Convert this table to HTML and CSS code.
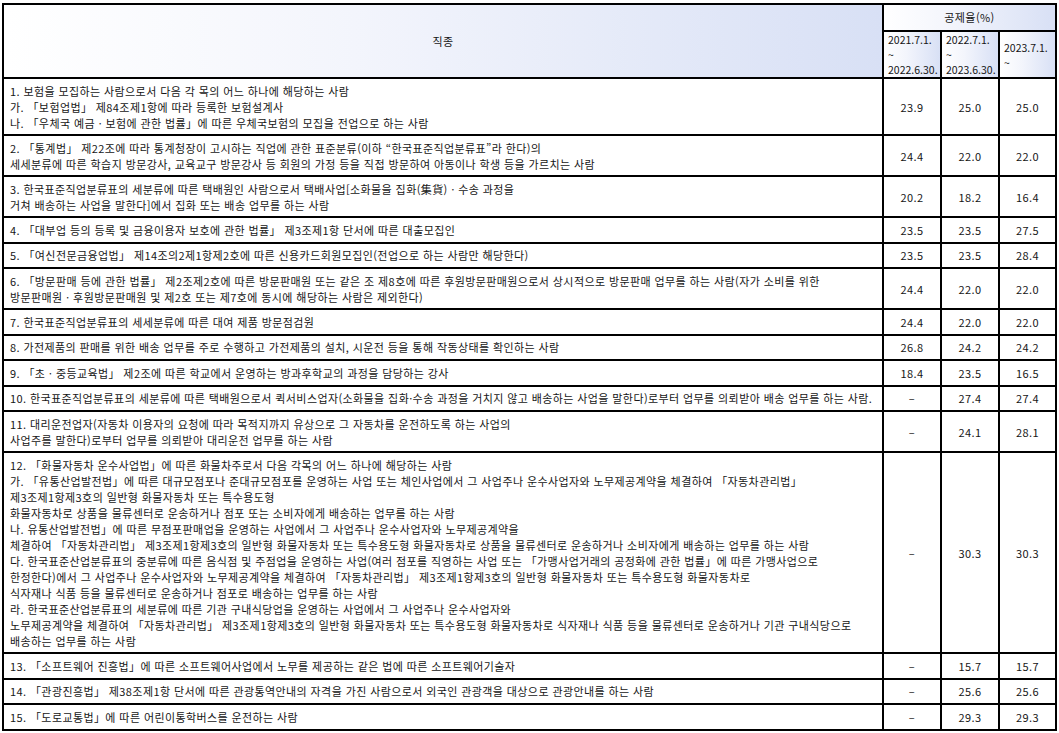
FILE: index.html
```html
<!DOCTYPE html>
<html lang="ko">
<head>
<meta charset="utf-8">
<title>직종별 공제율</title>
<link rel="stylesheet" href="styles.css">
</head>
<body>
<table class="rate-table">
  <colgroup>
    <col class="c-job">
    <col class="c-rate">
    <col class="c-rate">
    <col class="c-rate last">
  </colgroup>
  <thead>
    <tr class="h1">
      <th rowspan="2" class="th-job">직종</th>
      <th colspan="3" class="th-rate">공제율(%)</th>
    </tr>
    <tr class="h2">
      <th class="th-period">2021.7.1.<br>~<br>2022.6.30.</th>
      <th class="th-period">2022.7.1.<br>~<br>2023.6.30.</th>
      <th class="th-period">2023.7.1.<br>~</th>
    </tr>
  </thead>
  <tbody>
    <tr>
      <td class="job">1. 보험을 모집하는 사람으로서 다음 각 목의 어느 하나에 해당하는 사람<br>가. 「보험업법」 제84조제1항에 따라 등록한 보험설계사<br>나. 「우체국 예금ㆍ보험에 관한 법률」에 따른 우체국보험의 모집을 전업으로 하는 사람</td>
      <td class="num">23.9</td><td class="num">25.0</td><td class="num">25.0</td>
    </tr>
    <tr>
      <td class="job">2. 「통계법」 제22조에 따라 통계청장이 고시하는 직업에 관한 표준분류(이하 “한국표준직업분류표”라 한다)의<br>세세분류에 따른 학습지 방문강사, 교육교구 방문강사 등 회원의 가정 등을 직접 방문하여 아동이나 학생 등을 가르치는 사람</td>
      <td class="num">24.4</td><td class="num">22.0</td><td class="num">22.0</td>
    </tr>
    <tr>
      <td class="job">3. 한국표준직업분류표의 세분류에 따른 택배원인 사람으로서 택배사업[소화물을 집화(集貨)ㆍ수송 과정을<br>거쳐 배송하는 사업을 말한다]에서 집화 또는 배송 업무를 하는 사람</td>
      <td class="num">20.2</td><td class="num">18.2</td><td class="num">16.4</td>
    </tr>
    <tr>
      <td class="job">4. 「대부업 등의 등록 및 금융이용자 보호에 관한 법률」 제3조제1항 단서에 따른 대출모집인</td>
      <td class="num">23.5</td><td class="num">23.5</td><td class="num">27.5</td>
    </tr>
    <tr>
      <td class="job">5. 「여신전문금융업법」 제14조의2제1항제2호에 따른 신용카드회원모집인(전업으로 하는 사람만 해당한다)</td>
      <td class="num">23.5</td><td class="num">23.5</td><td class="num">28.4</td>
    </tr>
    <tr>
      <td class="job">6. 「방문판매 등에 관한 법률」 제2조제2호에 따른 방문판매원 또는 같은 조 제8호에 따른 후원방문판매원으로서 상시적으로 방문판매 업무를 하는 사람(자가 소비를 위한<br>방문판매원ㆍ후원방문판매원 및 제2호 또는 제7호에 동시에 해당하는 사람은 제외한다)</td>
      <td class="num">24.4</td><td class="num">22.0</td><td class="num">22.0</td>
    </tr>
    <tr>
      <td class="job">7. 한국표준직업분류표의 세세분류에 따른 대여 제품 방문점검원</td>
      <td class="num">24.4</td><td class="num">22.0</td><td class="num">22.0</td>
    </tr>
    <tr>
      <td class="job">8. 가전제품의 판매를 위한 배송 업무를 주로 수행하고 가전제품의 설치, 시운전 등을 통해 작동상태를 확인하는 사람</td>
      <td class="num">26.8</td><td class="num">24.2</td><td class="num">24.2</td>
    </tr>
    <tr>
      <td class="job">9. 「초ㆍ중등교육법」 제2조에 따른 학교에서 운영하는 방과후학교의 과정을 담당하는 강사</td>
      <td class="num">18.4</td><td class="num">23.5</td><td class="num">16.5</td>
    </tr>
    <tr>
      <td class="job">10. 한국표준직업분류표의 세분류에 따른 택배원으로서 퀵서비스업자(소화물을 집화·수송 과정을 거치지 않고 배송하는 사업을 말한다)로부터 업무를 의뢰받아 배송 업무를 하는 사람.</td>
      <td class="num">–</td><td class="num">27.4</td><td class="num">27.4</td>
    </tr>
    <tr>
      <td class="job">11. 대리운전업자(자동차 이용자의 요청에 따라 목적지까지 유상으로 그 자동차를 운전하도록 하는 사업의<br>사업주를 말한다)로부터 업무를 의뢰받아 대리운전 업무를 하는 사람</td>
      <td class="num">–</td><td class="num">24.1</td><td class="num">28.1</td>
    </tr>
    <tr>
      <td class="job">12. 「화물자동차 운수사업법」에 따른 화물차주로서 다음 각목의 어느 하나에 해당하는 사람<br>가. 「유통산업발전법」에 따른 대규모점포나 준대규모점포를 운영하는 사업 또는 체인사업에서 그 사업주나 운수사업자와 노무제공계약을 체결하여 「자동차관리법」<br>제3조제1항제3호의 일반형 화물자동차 또는 특수용도형<br>화물자동차로 상품을 물류센터로 운송하거나 점포 또는 소비자에게 배송하는 업무를 하는 사람<br>나. 유통산업발전법」에 따른 무점포판매업을 운영하는 사업에서 그 사업주나 운수사업자와 노무제공계약을<br>체결하여 「자동차관리법」 제3조제1항제3호의 일반형 화물자동차 또는 특수용도형 화물자동차로 상품을 물류센터로 운송하거나 소비자에게 배송하는 업무를 하는 사람<br>다. 한국표준산업분류표의 중분류에 따른 음식점 및 주점업을 운영하는 사업(여러 점포를 직영하는 사업 또는 「가맹사업거래의 공정화에 관한 법률」에 따른 가맹사업으로<br>한정한다)에서 그 사업주나 운수사업자와 노무제공계약을 체결하여 「자동차관리법」 제3조제1항제3호의 일반형 화물자동차 또는 특수용도형 화물자동차로<br>식자재나 식품 등을 물류센터로 운송하거나 점포로 배송하는 업무를 하는 사람<br>라. 한국표준산업분류표의 세분류에 따른 기관 구내식당업을 운영하는 사업에서 그 사업주나 운수사업자와<br>노무제공계약을 체결하여 「자동차관리법」 제3조제1항제3호의 일반형 화물자동차 또는 특수용도형 화물자동차로 식자재나 식품 등을 물류센터로 운송하거나 기관 구내식당으로<br>배송하는 업무를 하는 사람</td>
      <td class="num">–</td><td class="num">30.3</td><td class="num">30.3</td>
    </tr>
    <tr>
      <td class="job">13. 「소프트웨어 진흥법」에 따른 소프트웨어사업에서 노무를 제공하는 같은 법에 따른 소프트웨어기술자</td>
      <td class="num">–</td><td class="num">15.7</td><td class="num">15.7</td>
    </tr>
    <tr>
      <td class="job">14. 「관광진흥법」 제38조제1항 단서에 따른 관광통역안내의 자격을 가진 사람으로서 외국인 관광객을 대상으로 관광안내를 하는 사람</td>
      <td class="num">–</td><td class="num">25.6</td><td class="num">25.6</td>
    </tr>
    <tr>
      <td class="job">15. 「도로교통법」에 따른 어린이통학버스를 운전하는 사람</td>
      <td class="num">–</td><td class="num">29.3</td><td class="num">29.3</td>
    </tr>
  </tbody>
</table>
</body>
</html>
```

FILE: styles.css
```css
html, body {
  margin: 0;
  padding: 0;
  background: #ffffff;
}

body {
  padding: 3px 0 0 2px;
  font-family: "Noto Sans CJK KR", "Noto Sans", sans-serif;
  font-size: 11px;
  color: #161616;
  letter-spacing: 0.4px;
}

.rate-table {
  border-collapse: collapse;
  table-layout: fixed;
  width: 1053px;
  border: 2px solid #000;
}

.c-job { width: 880px; }
.c-rate { width: 58px; }
.c-rate.last { width: 57px; }

.rate-table th,
.rate-table td {
  border: 2px solid #000;
  font-weight: normal;
}

.rate-table th {
  background: linear-gradient(to right, #ffffff 0%, #f3f5fc 40%, #d8e0f5 100%);
  line-height: 15px;
  padding: 0 4px;
}

.h1 { height: 27px; }
.h2 { height: 47px; }

.th-job {
  text-align: center;
  padding-left: 10px;
}

.th-rate {
  text-align: center;
}

.th-period {
  text-align: left;
  white-space: nowrap;
  font-size: 10.5px;
  letter-spacing: 0;
  padding: 0 3px 0 4px;
}

.job {
  text-align: left;
  white-space: nowrap;
  line-height: 16px;
  padding: 3.5px 6px 3.5px 6px;
  vertical-align: middle;
}

.num {
  text-align: center;
  line-height: 16px;
  padding: 3.5px 0 3.5px 0;
  vertical-align: middle;
}

.rate-table tbody tr {
  height: 25.5px;
}
```
